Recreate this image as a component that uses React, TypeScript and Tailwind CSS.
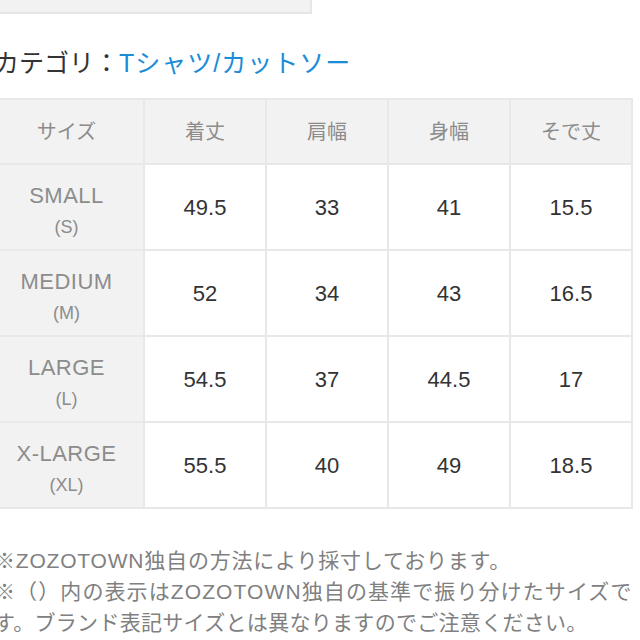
import React from "react";

const font = { fontFamily: '"Liberation Sans", "Noto Sans CJK JP", sans-serif' };

const rows = [
  { name: "SMALL", code: "(S)", v: ["49.5", "33", "41", "15.5"] },
  { name: "MEDIUM", code: "(M)", v: ["52", "34", "43", "16.5"] },
  { name: "LARGE", code: "(L)", v: ["54.5", "37", "44.5", "17"] },
  { name: "X-LARGE", code: "(XL)", v: ["55.5", "40", "49", "18.5"] },
];

const heads = ["サイズ", "着丈", "肩幅", "身幅", "そで丈"];

export default function App() {
  return (
    <div className="w-[640px] h-[640px] bg-white overflow-hidden" style={font}>
      <div className="-ml-[12px]">
        <div className="w-[324px] h-[14px] bg-[#f2f2f2] border-b-2 border-r-2 border-[#e6e6e6]" />
        <div className="pt-[35px] pb-[21px] pl-[6px] text-[25px] leading-[28px] whitespace-nowrap text-[#333]">
          カテゴリ：<span className="text-[#1a8cd8] tracking-[1px]">Tシャツ/カットソー</span>
        </div>
        <div className="grid grid-cols-[153px_120px_120px_120px_120px] grid-rows-[63px_84px_84px_84px_84px] gap-[2px] p-[2px] bg-[#e8e8e8] w-[645px]">
          {heads.map((h) => (
            <div key={h} className="bg-[#f2f2f2] flex items-center justify-center text-[20px] text-[#8c8c8c]">
              {h}
            </div>
          ))}
          {rows.map((r) => (
            <React.Fragment key={r.name}>
              <div className="bg-[#f2f2f2] flex flex-col items-center justify-center pt-[10px] text-[#8c8c8c]">
                <div className="text-[22px] leading-[30px] tracking-[0.5px]">{r.name}</div>
                <div className="text-[18px] leading-[32px]">{r.code}</div>
              </div>
              {r.v.map((x, i) => (
                <div key={i} className="bg-white flex items-center justify-center text-[22px] text-[#333]">
                  {x}
                </div>
              ))}
            </React.Fragment>
          ))}
        </div>
        <div className="mt-[36px] pl-[6px] text-[21px] leading-[31px] text-[#808080] whitespace-nowrap">
          <div className="tracking-[0.8px]">※ZOZOTOWN独自の方法により採寸しております。</div>
          <div className="tracking-[1.1px]">※（）内の表示はZOZOTOWN独自の基準で振り分けたサイズで</div>
          <div className="tracking-[0.3px]">す。ブランド表記サイズとは異なりますのでご注意ください。</div>
        </div>
      </div>
    </div>
  );
}
